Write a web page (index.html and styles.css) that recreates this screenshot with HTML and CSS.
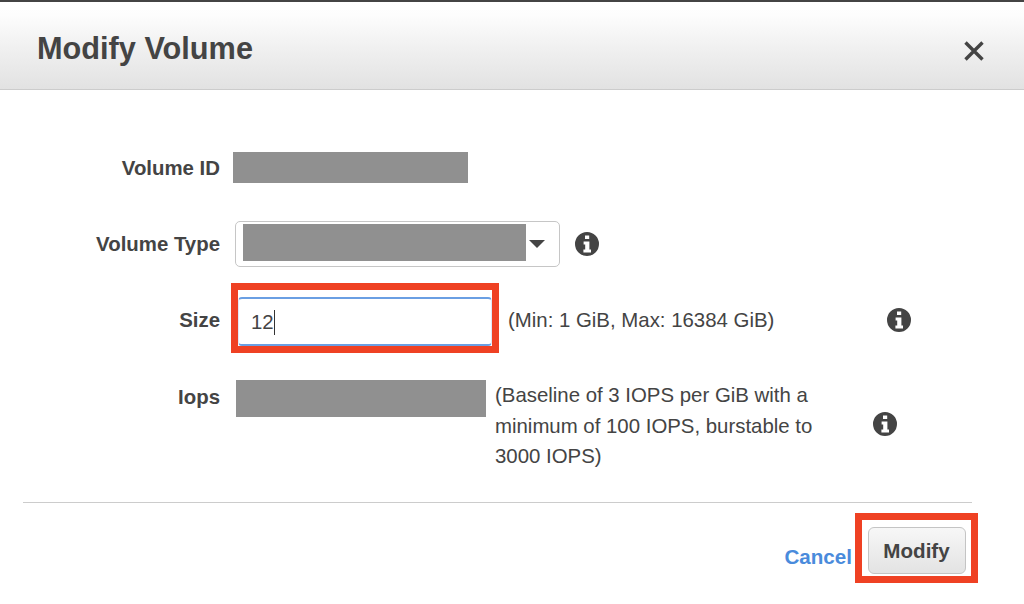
FILE: index.html
```html
<!DOCTYPE html>
<html lang="en">
<head>
<meta charset="utf-8">
<title>Modify Volume</title>
<link rel="stylesheet" href="styles.css">
</head>
<body>
<svg class="sprite" width="0" height="0" aria-hidden="true">
  <symbol id="info" viewBox="0 0 24 24">
    <path fill-rule="evenodd" fill="#444" d="M12 0a12 12 0 1 0 0 24a12 12 0 0 0 0-24zM10 3.5h4.2v3.6H10zM8.6 9.6h5.8v8h1.6v2.9H8.4v-2.9h1.8v-5.1H8.6z"/>
  </symbol>
</svg>
<div class="dialog">
  <header class="head">
    <h1 class="title">Modify Volume</h1>
    <svg class="close" viewBox="0 0 20 20" width="20" height="20" aria-label="Close"><path d="M1.5 1.5L18.5 18.5M18.5 1.5L1.5 18.5" stroke="#444" stroke-width="3.4" fill="none"/></svg>
  </header>
  <main class="form">
    <div class="row row-id">
      <span class="label">Volume ID</span>
      <div class="redact redact-id"></div>
    </div>
    <div class="row row-type">
      <span class="label">Volume Type</span>
      <div class="select">
        <div class="redact redact-type"></div>
        <span class="caret"></span>
      </div>
      <svg class="info info-type"><use href="#info"/></svg>
    </div>
    <div class="row row-size">
      <span class="label label-size">Size</span>
      <div class="mark mark-size">
        <div class="input"><span>12</span><i class="cursor"></i></div>
      </div>
      <span class="hint hint-size">(Min: 1 GiB, Max: 16384 GiB)</span>
      <svg class="info info-size"><use href="#info"/></svg>
    </div>
    <div class="row row-iops">
      <span class="label label-iops">Iops</span>
      <div class="redact redact-iops"></div>
      <p class="hint hint-iops">(Baseline of 3 IOPS per GiB with a minimum of 100 IOPS, burstable to 3000 IOPS)</p>
      <svg class="info info-iops"><use href="#info"/></svg>
    </div>
    <hr class="rule">
    <div class="actions">
      <a class="cancel" href="#">Cancel</a>
      <div class="mark mark-modify">
        <button class="modify" type="button">Modify</button>
      </div>
    </div>
  </main>
</div>
</body>
</html>
```

FILE: styles.css
```css
* { box-sizing: border-box; }
html, body { margin: 0; height: 100%; background: #fff; }
body { font-family: "Liberation Sans", Arial, sans-serif; color: #444; overflow: hidden; }
.sprite { position: absolute; }
.dialog { width: 1024px; height: 604px; display: flex; flex-direction: column; }
.head {
  height: 90px;
  flex: none;
  display: flex;
  align-items: center;
  justify-content: space-between;
  padding: 10px 40px 0 37px;
  border-top: 2px solid #444;
  border-bottom: 1px solid #ccc;
  background: linear-gradient(#fff 0%, #fdfdfd 15%, #f1f1f1 50%, #e2e2e2 100%);
}
.title { margin: 0 0 3px; font-size: 30.7px; font-weight: 700; line-height: 34px; color: #444; }
.close { display: block; }
.form { flex: 1; display: flex; flex-direction: column; padding-top: 62px; }
.row { display: flex; align-items: center; flex: none; }
.label { width: 220px; flex: none; text-align: right; font-size: 20.4px; font-weight: 700; line-height: 22px; color: #444; }
.redact { background: #909090; flex: none; }
.row-id { height: 31px; }
.redact-id { width: 235px; height: 31px; margin-left: 13px; }
.row-type { height: 46px; margin-top: 38px; }
.select {
  width: 325px;
  height: 46px;
  margin-left: 15px;
  display: flex;
  align-items: center;
  flex: none;
  padding-left: 7px;
  background: #fff;
  border: 1px solid #c6c6c6;
  border-radius: 5px;
}
.redact-type { width: 283px; height: 37px; margin-bottom: 3px; }
.caret { width: 0; height: 0; margin-left: 3px; border-style: solid; border-width: 8px 8px 0; border-color: #444 transparent transparent; }
.info { width: 24px; height: 24px; flex: none; display: block; }
.info-type { margin-left: 15px; }
.row-size { height: 70px; margin-top: 16px; }
.label-size { margin-top: 4px; }
.mark { border: 7px solid #ef4123; background: #fff; flex: none; }
.mark-size { width: 268px; height: 70px; margin-left: 11px; padding: 7px 0 0; }
.input {
  height: 49px;
  display: flex;
  align-items: center;
  padding: 2px 0 0 12px;
  font-size: 20.4px;
  color: #444;
  background: #fff;
  border: 1px solid #dfe8f5;
  border-top: 2px solid #6a9fe3;
  border-bottom: 2px solid #6a9fe3;
  border-radius: 4px;
}
.cursor { width: 1px; height: 25px; background: #333; }
.hint { font-size: 20.4px; color: #444; }
.hint-size { margin: 4px 0 0 9px; width: 379px; flex: none; }
.info-size { margin-top: 4px; }
.row-iops { align-items: flex-start; margin-top: 27px; height: 92px; }
.label-iops { margin-top: 6px; }
.redact-iops { width: 250px; height: 37px; margin-left: 16px; }
.hint-iops { width: 340px; flex: none; margin: 0 0 0 9px; line-height: 30.5px; }
.info-iops { margin: 32px 0 0 38px; }
.rule { width: 949px; margin: 30px 0 0 23px; border: 0; border-top: 1px solid #ccc; flex: none; }
.actions { display: flex; align-items: center; justify-content: flex-end; margin-top: 10px; padding-right: 46px; }
.cancel { font-size: 20.6px; font-weight: 700; color: #4a8bdc; text-decoration: none; margin: 18px 3px 0 0; }
.mark-modify { width: 123px; height: 70px; display: flex; align-items: center; justify-content: center; padding-top: 5px; }
.modify {
  width: 98px;
  height: 47px;
  font: 700 20.6px "Liberation Sans", Arial, sans-serif;
  color: #444;
  background: linear-gradient(#f7f7f7, #e3e3e3);
  border: 1px solid #c4c4c4;
  border-radius: 6px;
  padding: 0;
}
```
